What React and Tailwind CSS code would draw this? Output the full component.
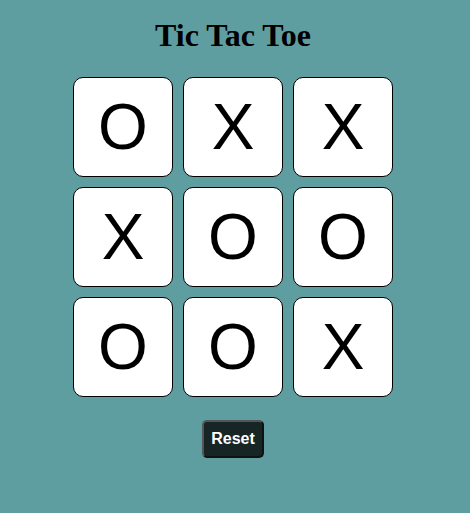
const board = ['O', 'X', 'X', 'X', 'O', 'O', 'O', 'O', 'X'];

export default function App() {
  return (
    <div className="min-h-screen w-full bg-[#5f9ea0]">
      <div className="flex w-[466px] flex-col items-center">
        <h1 className="mt-[17px] font-['Liberation_Serif',serif] text-[32px] font-bold leading-[36px] text-black">
          Tic Tac Toe
        </h1>
        <div className="mt-[24px] grid grid-cols-[repeat(3,100px)] gap-[10px]">
          {board.map((v, i) => (
            <div
              key={i}
              className="flex h-[100px] w-[100px] items-center justify-center rounded-[10px] border border-black bg-white font-['Liberation_Sans',Arial,sans-serif] text-[64px] leading-none text-black"
            >
              {v}
            </div>
          ))}
        </div>
        <button className="mt-[23px] flex h-[38px] w-[62px] items-center justify-center rounded-[5px] border-2 border-t-[#555] border-l-[#555] border-b-[#111] border-r-[#111] bg-[#172525] font-['Liberation_Sans',Arial,sans-serif] text-[16px] font-bold text-white">
          Reset
        </button>
      </div>
    </div>
  );
}
